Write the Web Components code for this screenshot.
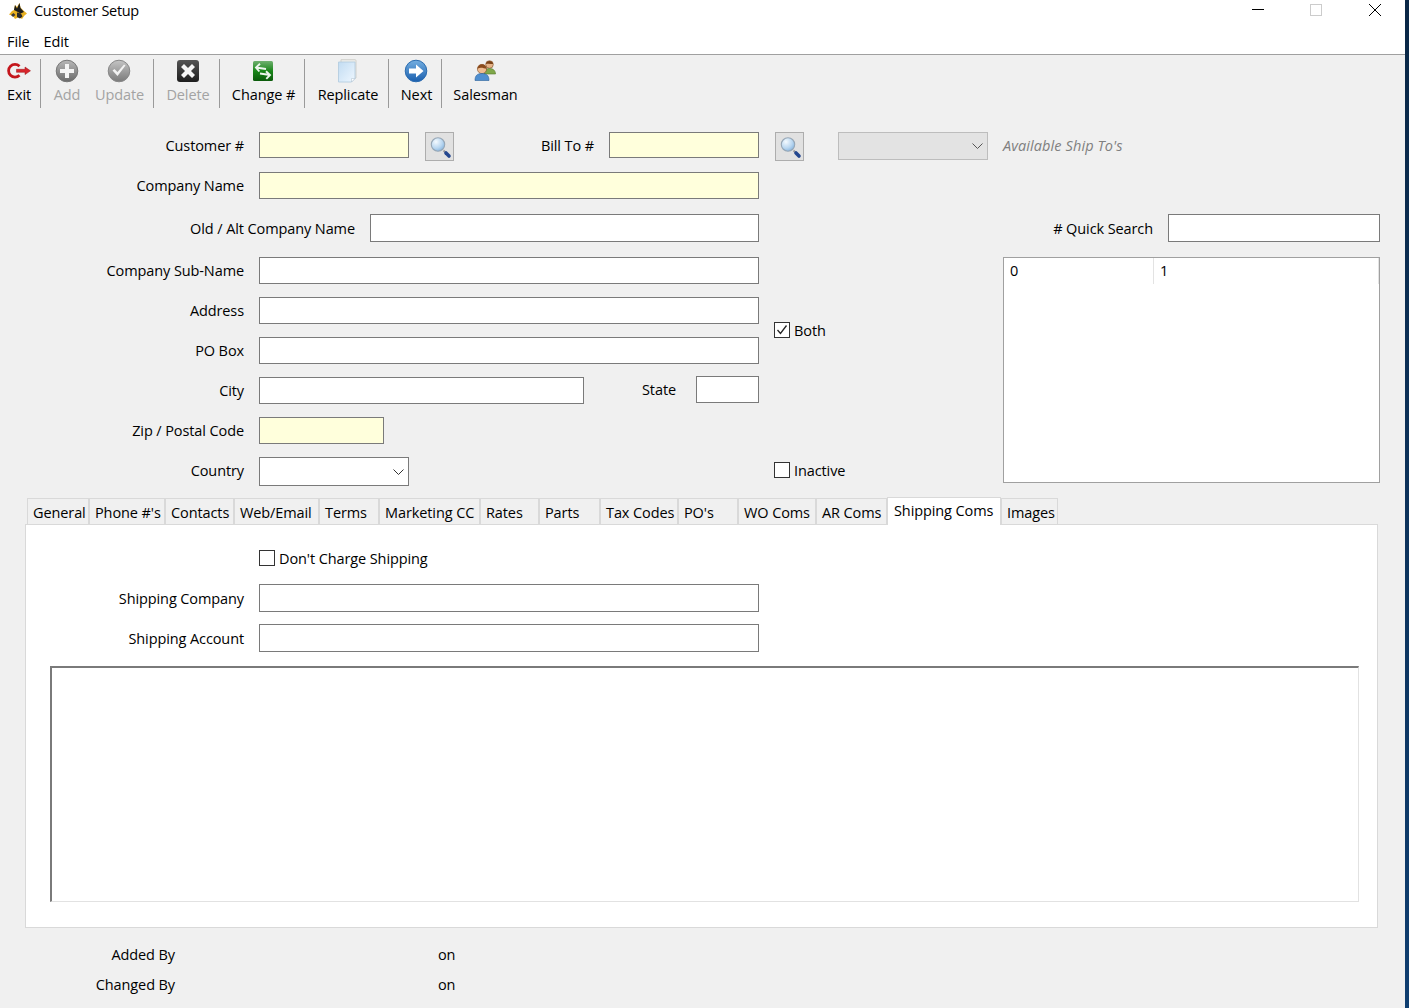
<!DOCTYPE html>
<html lang="en"><head><meta charset="utf-8"><title>Customer Setup</title>
<style>
html,body{margin:0;padding:0;background:#0d3560;}
body{width:1409px;height:1008px;overflow:hidden;background:linear-gradient(#0a2746,#0f3e70);}
audit-line:first-of-type{margin-top:11px}
</style></head><body>
<app-window>
  <title-bar title-text="Customer Setup"></title-bar>
  <menu-bar><menu-item>File</menu-item><menu-item>Edit</menu-item></menu-bar>
  <tool-bar>
    <tool-button icon="exit" w="24">Exit</tool-button><tool-sep></tool-sep>
    <tool-button icon="add" w="28" disabled>Add</tool-button><tool-gap></tool-gap>
    <tool-button icon="update" w="49" disabled>Update</tool-button><tool-sep></tool-sep>
    <tool-button icon="delete" w="44" disabled>Delete</tool-button><tool-sep></tool-sep>
    <tool-button icon="change" w="63">Change #</tool-button><tool-sep></tool-sep>
    <tool-button icon="replicate" w="62">Replicate</tool-button><tool-sep></tool-sep>
    <tool-button icon="next" w="31">Next</tool-button><tool-sep></tool-sep>
    <tool-button icon="people" w="63">Salesman</tool-button>
  </tool-bar>
  <customer-form></customer-form>
  <tab-strip>
    <tab-item w="62">General</tab-item><tab-item w="76">Phone #'s</tab-item><tab-item w="69">Contacts</tab-item>
    <tab-item w="85">Web/Email</tab-item><tab-item w="60">Terms</tab-item><tab-item w="101">Marketing CC</tab-item>
    <tab-item w="59">Rates</tab-item><tab-item w="61">Parts</tab-item><tab-item w="78">Tax Codes</tab-item>
    <tab-item w="60">PO's</tab-item><tab-item w="78">WO Coms</tab-item><tab-item w="71">AR Coms</tab-item>
    <tab-item w="114" active>Shipping Coms</tab-item><tab-item w="57">Images</tab-item>
  </tab-strip>
  <shipping-panel></shipping-panel>
  <audit-line label="Added By"></audit-line>
  <audit-line label="Changed By"></audit-line>
</app-window>
<script>
const ICONS={
exit:`<svg width="26" height="24" viewBox="0 0 26 24"><path d="M13.500 7.200A6.400 6.400 0 1 0 13.500 16.300" fill="none" stroke="#c4161c" stroke-width="2.800"/><path d="M10.500 10.300h8.500V8l5.500 3.800-5.500 3.800v-2.300h-8.500z" fill="#d8252b" stroke="#9a1216" stroke-width=".5"/></svg>`,
add:`<svg width="24" height="24" viewBox="0 0 24 24"><defs><linearGradient id="g" x1="0" y1="0" x2="0" y2="1"><stop offset="0" stop-color="#b8b8b8"/><stop offset="1" stop-color="#6a6a6a"/></linearGradient></defs><circle cx="12" cy="12" r="10.800" fill="url(#g)" stroke="#777"/><path d="M10 5h4v5h5v4h-5v5h-4v-5H5v-4h5z" fill="#f4f4f4"/></svg>`,
update:`<svg width="24" height="24" viewBox="0 0 24 24"><defs><linearGradient id="g" x1="0" y1="0" x2="0" y2="1"><stop offset="0" stop-color="#c4c4c4"/><stop offset="1" stop-color="#7a7a7a"/></linearGradient></defs><circle cx="12" cy="12" r="10.800" fill="url(#g)" stroke="#888"/><path d="M5.500 11.500l5 5.500 8-10.500-1.500-1L10.500 13 7.500 10z" fill="#f2f2f2"/></svg>`,
delete:`<svg width="24" height="24" viewBox="0 0 24 24"><defs><linearGradient id="g" x1="0" y1="0" x2="0" y2="1"><stop offset="0" stop-color="#555"/><stop offset="1" stop-color="#1e1e1e"/></linearGradient></defs><rect x="1" y="1" width="22" height="22" rx="3" fill="url(#g)"/><path d="M5 8l3-3 4 4 4-4 3 3-4 4 4 4-3 3-4-4-4 4-3-3 4-4z" fill="#f6f6f6"/></svg>`,
change:`<svg width="22" height="22" viewBox="0 0 22 22"><defs><linearGradient id="g" x1="0" y1="0" x2="0" y2="1"><stop offset="0" stop-color="#6fb06f"/><stop offset=".5" stop-color="#1a861a"/><stop offset="1" stop-color="#0b5a0b"/></linearGradient></defs><rect x="1" y="1" width="20" height="20" rx="1.500" fill="url(#g)"/><g fill="none" stroke="#eef5ee" stroke-width="1.900"><path d="M4 7.500l10 1.500M8 3.800L4 7.500l3.300 4"/><path d="M18 15l-10-1.500M14 11.200l4 3.800-3.700 3.800"/></g></svg>`,
replicate:`<svg width="22" height="24" viewBox="0 0 22 24"><defs><linearGradient id="g" x1="0" y1="0" x2="1" y2="1"><stop offset="0" stop-color="#c2dcf2"/><stop offset="1" stop-color="#eef7ff"/></linearGradient></defs><path d="M4 .7h14a1 1 0 0 1 1 1V19H4z" fill="#eeeeea" stroke="#d0d0cc"/><path d="M1.500 3h16.500v16.500l-3.500 3.500H1.500z" fill="url(#g)" stroke="#b4cde0" stroke-width=".9"/><path d="M18 19.500l-3.500 3.500v-3.500z" fill="#fff" stroke="#a8bccc" stroke-width=".5"/></svg>`,
next:`<svg width="24" height="24" viewBox="0 0 24 24"><defs><linearGradient id="g" x1="0" y1="0" x2="0" y2="1"><stop offset="0" stop-color="#74aee0"/><stop offset="1" stop-color="#1a5fae"/></linearGradient></defs><circle cx="12" cy="12" r="10.800" fill="url(#g)" stroke="#2b6cb0"/><path d="M5 9.500h7V5.500L19.500 12 12 18.500v-4H5z" fill="#fff"/></svg>`,
people:`<svg width="24" height="24" viewBox="0 0 24 24"><circle cx="16.500" cy="5.500" r="3.800" fill="#e6b48a" stroke="#7a4a20" stroke-width=".6"/><path d="M12.800 5a3.800 3.800 0 0 1 7.400 0c-2 0-4.400-.8-7.400 0z" fill="#7a4218"/><path d="M11 15c0-3.500 2-5.500 5.500-5.500s6 2 6 5.500z" fill="#7fa84a" stroke="#55772a" stroke-width=".6"/><circle cx="9" cy="10" r="4.600" fill="#eebc92" stroke="#7a4a20" stroke-width=".6"/><path d="M4.500 9.800a4.500 4.500 0 0 1 9 0c-2.700-.3-5.800-2-9 0z" fill="#8a4a1c"/><path d="M2 21.500c0-5 2.300-7 7-7s7 2 7 7z" fill="#4f8fd0" stroke="#2a5f98" stroke-width=".6"/></svg>`,
search:`<svg width="24" height="24" viewBox="0 0 24 24"><defs><radialGradient id="l" cx=".35" cy=".3" r=".8"><stop offset="0" stop-color="#f4faff"/><stop offset=".6" stop-color="#b8d6f0"/><stop offset="1" stop-color="#7eaedc"/></radialGradient></defs><path d="M15.500 15.500l2.500 2.500" stroke="#9a9a9a" stroke-width="2"/><path d="M18 18l3 3" stroke="#24478f" stroke-width="3.600" stroke-linecap="round"/><circle cx="10" cy="9.500" r="6.700" fill="url(#l)" stroke="#97a7b6" stroke-width="1.100"/></svg>`,
wolf:`<svg width="18" height="18" viewBox="0 0 18 18"><path d="M0 12.500L3 9l2-1 1-5 2 2 2.500-4 1 4.500L15 9l3 2.500-2.500 2-2.500 3.500-3-2-4 2-2-3z" fill="#e8b020"/><path d="M6 3l2 3.500L10.500 1l1 5 3.500 4-3.500 1.500L8 9.500 5 8z" fill="#1c1c1c"/><path d="M8 10.500l4 1 1.500 3-2.500 2-3-1.500z" fill="#2a2a2a"/><path d="M2 13l2.500-2 2 2L4 15z" fill="#3a3a3a"/></svg>`
};
const base=`:host{box-sizing:border-box}*{box-sizing:border-box}`;
function def(name,html){customElements.define(name,class extends HTMLElement{
  constructor(){super();this.attachShadow({mode:'open'})}
  connectedCallback(){if(this.shadowRoot.childElementCount)return;this.shadowRoot.innerHTML=(typeof html==='function'?html(this):html);}
})}
const a=(e,n,d='')=>e.getAttribute(n)??d;

def('app-window',`<style>${base}:host{display:block;width:1405px;height:1008px;background:#f0f0f0;color:#000;font:14.5px/19px "Open Sans",sans-serif;letter-spacing:-.1px;overflow:hidden}</style><slot></slot>`);

def('title-bar',e=>`<style>${base}:host{display:flex;align-items:center;height:22px;background:#fff;padding-left:9px}
.t{margin:0 0 2px 7px;letter-spacing:-.3px}.s{flex:1}.c{width:58.500px;height:20px;display:flex;align-items:center;justify-content:center;align-self:flex-start}svg{display:block}</style>
${ICONS.wolf}<span class="t">${a(e,'title-text')}</span><span class="s"></span>
<span class="c"><svg width="14" height="20"><path d="M1 9.500h12" stroke="#000"/></svg></span>
<span class="c"><svg width="14" height="20"><rect x="1.500" y="4.500" width="11" height="11" fill="none" stroke="#ccc"/></svg></span>
<span class="c" style="margin-right:1px"><svg width="14" height="20"><path d="M1 4l12 12M13 4L1 16" stroke="#000"/></svg></span>`);

def('menu-bar',`<style>${base}:host{display:flex;align-items:flex-end;gap:14px;height:33px;background:#fff;border-bottom:1px solid #a0a0a0;padding:0 0 3px 7px}</style><slot></slot>`);
def('menu-item',`<style>:host{display:block}</style><slot></slot>`);

def('tool-bar',`<style>${base}:host{display:flex;align-items:flex-start;height:55px;padding:4px 0 0 7px;white-space:nowrap}</style><slot></slot>`);
def('tool-sep',`<style>:host{display:block;width:1px;height:49px;background:#9a9a9a;margin:0 12px 0 9px;flex:none}</style>`);
def('tool-gap',`<style>:host{display:block;width:14px;height:1px;flex:none}</style>`);
def('tool-button',e=>`<style>${base}:host{display:flex;flex:none;flex-direction:column;align-items:center;width:${a(e,'w')}px;${e.hasAttribute('disabled')?'color:#a3a3a3;':''}}
.i{height:24px;display:flex;align-items:center;justify-content:center;width:100%;padding-right:${a(e,'w')%2}px}svg{display:block;flex:none}.l{margin-top:2px;}</style>
<span class="i">${ICONS[a(e,'icon')]}</span><span class="l"><slot></slot></span>`);

def('lf-field',e=>`<style>${base}:host{display:flex;align-items:center;flex:none}
.l{width:${a(e,'lw')}px;text-align:right;flex:none;white-space:nowrap}
input{margin:0 0 0 ${a(e,'gap','15')}px;width:${a(e,'iw')}px;height:${a(e,'ih','27')}px;border:1px solid #7a7a7a;background:${e.hasAttribute('req')?'#ffffdc':'#fff'};padding:1px 3px;font:inherit;outline:0;border-radius:0;display:block}</style>
<span class="l">${a(e,'label')}</span><input type="text" aria-label="${a(e,'label')}">`);

def('lookup-button',`<style>${base}:host{display:flex;align-items:center;justify-content:center;width:29px;height:29px;background:#e1e1e1;border:1px solid #adadad;flex:none}svg{display:block;flex:none}</style>${ICONS.search}`);

def('drop-select',e=>{const d=e.hasAttribute('disabled');return `<style>${base}:host{display:block;position:relative;width:150px;height:${a(e,'h','28')}px;flex:none}
select{appearance:none;-webkit-appearance:none;display:block;width:100%;height:100%;margin:0;border:1px solid ${d?'#a8a8a8':'#7a7a7a'};background:${d?'#dedede':'#fff'};border-radius:0;font:inherit;outline:0}
svg{position:absolute;right:5px;top:50%;margin-top:-3px;display:block}</style>
<select ${d?'disabled':''} aria-label="${a(e,'label')}"><option></option></select><svg width="11" height="6"><path d="M.5.500L5.500 5.500l5-5" fill="none" stroke="${d?'#555':'#333'}"/></svg>`});

def('check-box',e=>`<style>${base}:host{display:flex;align-items:center;gap:4px;height:16px;white-space:nowrap}
.b{width:16px;height:16px;background:#fff;border:1px solid #333;flex:none;display:block}svg{display:block}</style>
<span class="b">${e.hasAttribute('checked')?'<svg width="14" height="14"><path d="M2.500 7l3 3.500 6-8" fill="none" stroke="#222" stroke-width="1.300"/></svg>':''}</span><span><slot></slot></span>`);

def('data-list',`<style>${base}:host{display:block;width:377px;height:226px;background:#fff;border:1px solid #a0a0a0}
.r{display:flex;height:26px}.c{padding:3px 0 0 6px;border-right:1px solid #e3e3e3}.a{width:150px}.b{width:225px}</style>
<div class="r"><div class="c a">0</div><div class="c b">1</div></div>`);

def('form-row',e=>`<style>${base}:host{display:flex;align-items:flex-start;height:${a(e,'h','40')}px}</style><slot></slot>`);

def('customer-form',`<style>${base}:host{display:block;padding-top:22px}
.first{display:flex;align-items:flex-start;height:40px}
.g1{margin-left:16px}.g2{margin-left:34px}
.ship{margin-left:15px;line-height:28px;color:#7f7f7f;font-style:italic;white-space:nowrap;letter-spacing:.1px}
.body{display:flex;height:325px}
.left{width:759px;flex:none}.mid{width:244px;flex:none;padding:150px 0 0 15px}
.right{width:377px;flex:none;padding-top:42px;display:flex;flex-direction:column;gap:15px}
.state{margin-top:-1px}
.inactive{margin-top:124px}
</style>
<div class="first">
  <lf-field label="Customer #" lw="244" iw="150" ih="26" req></lf-field><lookup-button class="g1"></lookup-button>
  <lf-field label="Bill To #" lw="140" iw="150" ih="26" req></lf-field><lookup-button class="g1"></lookup-button>
  <drop-select class="g2" disabled label="Available Ship To's"></drop-select><span class="ship">Available Ship To's</span>
</div>
<div class="body">
  <div class="left">
    <form-row h="42"><lf-field label="Company Name" lw="244" iw="500" req></lf-field></form-row>
    <form-row h="43"><lf-field label="Old / Alt Company Name" lw="355" iw="389" ih="28"></lf-field></form-row>
    <form-row><lf-field label="Company Sub-Name" lw="244" iw="500"></lf-field></form-row>
    <form-row><lf-field label="Address" lw="244" iw="500"></lf-field></form-row>
    <form-row><lf-field label="PO Box" lw="244" iw="500"></lf-field></form-row>
    <form-row><lf-field label="City" lw="244" iw="325"></lf-field><lf-field class="state" label="State" lw="92" gap="20" iw="63"></lf-field></form-row>
    <form-row><lf-field label="Zip / Postal Code" lw="244" iw="125" req></lf-field></form-row>
    <form-row><lf-field label="Country" lw="244" iw="0" style="width:259px"></lf-field><drop-select h="29" label="Country"></drop-select></form-row>
  </div>
  <div class="mid"><check-box checked>Both</check-box><check-box class="inactive">Inactive</check-box></div>
  <div class="right"><lf-field label="# Quick Search" lw="150" iw="212" ih="28"></lf-field><data-list></data-list></div>
</div>`);

def('tab-strip',`<style>${base}:host{display:flex;align-items:flex-end;height:27px;padding-left:27px;position:relative;z-index:1}</style><slot></slot>`);
def('tab-item',e=>{const on=e.hasAttribute('active');return `<style>${base}:host{display:block;flex:none;width:${a(e,'w')}px;height:${on?28:26}px;${on?'margin:0 0 -1px 0;background:#fff;':'background:#f0f0f0;'}border:1px solid #d9d9d9;${on?'border-bottom:0;padding:3px 0 0 6px;':'border-width:1px 1px 0 1px;padding:4px 0 0 5px;'}white-space:nowrap}</style><slot></slot>`});

def('shipping-panel',`<style>${base}:host{display:block;margin-left:25px;width:1353px;height:404px;background:#fff;border:1px solid #d9d9d9;padding-top:25px}
.chk{margin:0 0 18px 233px}
.row{height:40px;}
.area{margin:2px 0 0 24px;width:1309px;height:236px;border:1px solid #e2e2e2;border-top:2px solid #7a7a7a;border-left:2px solid #7a7a7a;background:#fff}
</style>
<check-box class="chk">Don't Charge Shipping</check-box>
<form-row class="row"><lf-field label="Shipping Company" lw="218" iw="500" ih="28"></lf-field></form-row>
<form-row class="row"><lf-field label="Shipping Account" lw="218" iw="500" ih="28"></lf-field></form-row>
<div class="area"></div>`);

def('audit-line',e=>`<style>${base}:host{display:flex;align-items:center;height:30px}
.l{width:175px;text-align:right}.o{margin-left:263px}</style><span class="l">${a(e,'label')}</span><span class="o">on</span>`);
</script>
</body></html>
